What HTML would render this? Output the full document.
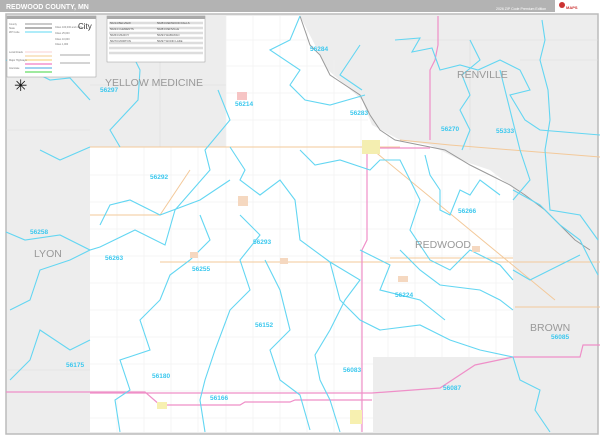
<!DOCTYPE html><html><head><style>
body{margin:0;width:600px;height:436px;overflow:hidden;background:#fff;font-family:"Liberation Sans",sans-serif}
</style></head><body>
<svg width="600" height="436" viewBox="0 0 600 436" xmlns="http://www.w3.org/2000/svg" font-family="Liberation Sans, sans-serif">
<rect width="600" height="436" fill="#fff"/>
<rect x="0" y="0" width="600" height="12" fill="#b3b3b3"/>
<text x="6" y="9" font-size="7" font-weight="bold" fill="#fff">REDWOOD COUNTY, MN</text>
<text x="496" y="10" font-size="3.5" fill="#fff">2026 ZIP Code Premium Edition</text>
<rect x="555" y="0" width="45" height="12" fill="#fff"/>
<circle cx="562" cy="5" r="3" fill="#c33"/><text x="566" y="9" font-size="4" fill="#c33" font-weight="bold">MAPS</text>
<rect x="6" y="14" width="592" height="420" fill="#ededed" stroke="#bbb" stroke-width="1.5"/>
<path d="M226,16 L300,16 L315,45 L328,70 L345,85 L362,100 L372,125 L400,140 L430,145 L460,160 L490,170 L513,188 L513,357 L373,357 L373,432 L90,432 L90,147 L226,147 Z" fill="#fff"/>
<g stroke="#eeeeee" stroke-width="0.6">
<path d="M90,175H513M90,202H513M90,229H513M90,256H513M90,283H513M90,310H513M90,337H513M90,364H373M90,391H373M90,418H373M226,40H310M226,66H325M226,93H350M226,120H368"/>
<path d="M117,147V432M144,147V432M171,147V432M198,147V432M226,16V432M253,16V432M280,16V432M307,30V432M334,60V432M361,90V432M388,130V357M415,140V357M442,150V357M469,162V357M496,175V357"/>
</g>
<g stroke="#ddd" stroke-width="0.6"><path d="M6,130H90M90,85H226M160,16V147M400,40H598M470,40V150M520,60H598M6,370H90"/></g>
<g stroke="#f3c99a" stroke-width="1" fill="none">
<path d="M90,147H400M190,170L160,215L90,215M160,262H330M330,262H600M390,258H513M373,150L555,300M515,307L600,307M400,140L450,145L600,157"/>
</g>
<path d="M300,16 L310,45 L320,55 L330,75 L345,85 L360,95 L370,115 L380,130 L395,140 L420,145 L445,150 L470,165 L490,175 L510,185 L525,195 L545,210 L560,225 L575,240 L590,250" stroke="#999" stroke-width="1" fill="none"/>
<g stroke="#ef8fc8" stroke-width="1.2" fill="none">
<path d="M438,16 V45 L435,60 L430,70 V140 M367,148 H430 M367,148 V240 L362,250 V432"/>
<path d="M6,392 H145 L160,405 H240 L245,402 H290 L295,400 H372 M90,393 H372"/>
<path d="M372,393 L440,388 L475,365 L513,357 L580,357 L583,345 H600"/>
</g>
<g stroke="#63d6f2" stroke-width="1.1" fill="none">
<path d="M140,16 L145,40 L130,50 L140,70 L138,100 L110,130 L120,147"/>
<path d="M218,90 L230,120 L205,150 L210,170 L175,210 L165,245 L135,230 L100,247 L90,250 L60,235 L25,240 L6,232"/>
<path d="M300,16 L290,40 L270,50 L300,70 L290,85 L305,100 L330,105 L365,95"/>
<path d="M360,45 L350,60 L340,75 L362,90"/>
<path d="M395,40 L420,38 L412,52 L432,48 L440,70 L460,65 L478,70 L500,60 L520,70 L530,90 L510,95 L525,120 L540,130 L600,135"/>
<path d="M470,40 L480,60 L462,75 L470,95 L460,110 L470,130 L462,150"/>
<path d="M542,20 L545,40 L540,60 L548,90 L550,120 L545,150 L550,210 L580,215 L598,240"/>
<path d="M500,70 L510,110 L520,150 L530,180 L513,200"/>
<path d="M425,155 L430,175 L440,190 L440,210 L450,215 L460,190 L470,195 L480,180 L500,195"/>
<path d="M300,150 L315,165 L340,160 L370,170 L380,160 L400,160 L410,180 L420,200 L410,230 L430,260 L450,270 L470,250 L500,265 L513,280"/>
<path d="M230,147 L245,170 L240,180 L260,195 L280,180 L295,200 L300,240 L330,262 L340,300 L360,320 L380,330 L420,325 L450,340 L480,350 L513,357"/>
<path d="M230,180 L200,200 L160,215 L130,200 L110,205 L100,225"/>
<path d="M200,215 L210,240 L190,260 L170,275 L160,300 L140,320 L150,350 L120,360 L130,390 L115,400 L120,432"/>
<path d="M240,215 L260,235 L240,260 L250,290 L230,310 L215,350 L205,380 L200,400 L205,432"/>
<path d="M265,260 L280,290 L290,330 L270,350 L280,380 L300,395 L310,430"/>
<path d="M330,262 L360,280 L345,300 L330,330 L315,355 L320,380 L330,400 L340,432"/>
<path d="M360,250 L390,265 L380,290 L420,300 L445,320"/>
<path d="M400,250 L420,270 L440,285 L480,290 L500,300 L513,310"/>
<path d="M513,190 L540,205 L560,225 L580,240 L590,260 L598,275"/>
<path d="M513,270 L530,280 L560,265 L580,255"/>
<path d="M513,357 L520,380 L540,390 L535,410 L550,432"/>
<path d="M90,340 L70,350 L40,330 L30,360 L10,380 M90,250 L70,260 L40,270 L30,300 L10,310"/>
<path d="M6,60 L30,70 L50,80 L70,78 L90,100 M40,150 L60,160 L90,147"/>
</g>
<g fill="#999" font-size="10.5">
<text x="105" y="86">YELLOW MEDICINE</text>
<text x="457" y="78">RENVILLE</text>
<text x="415" y="248">REDWOOD</text>
<text x="34" y="257">LYON</text>
<text x="530" y="331">BROWN</text>
</g>
<g fill="#3cc8ee" font-size="6.5" font-weight="bold">
<text x="100" y="92">56297</text><text x="310" y="51">56284</text><text x="235" y="106">56214</text>
<text x="350" y="115">56283</text><text x="441" y="131">56270</text><text x="496" y="133">55333</text>
<text x="150" y="179">56292</text><text x="458" y="213">56266</text><text x="253" y="244">56293</text>
<text x="30" y="234">56258</text><text x="105" y="260">56263</text><text x="192" y="271">56255</text>
<text x="395" y="297">56224</text><text x="551" y="339">56085</text><text x="255" y="327">56152</text>
<text x="66" y="367">56175</text><text x="152" y="378">56180</text><text x="343" y="372">56083</text>
<text x="443" y="390">56087</text><text x="210" y="400">56166</text>
</g>
<g fill="#f5d8c0"><rect x="237" y="92" width="10" height="8" fill="#f6c4c4"/><rect x="238" y="196" width="10" height="10"/><rect x="280" y="258" width="8" height="6"/><rect x="190" y="252" width="8" height="6"/><rect x="398" y="276" width="10" height="6"/><rect x="472" y="246" width="8" height="6"/><rect x="350" y="410" width="12" height="14" fill="#f7f0b0"/><rect x="157" y="402" width="10" height="7" fill="#f7f0b0"/><rect x="362" y="140" width="18" height="14" fill="#f4eeb0"/></g>
<rect x="7" y="16" width="89" height="61" fill="#fff" stroke="#999" stroke-width="0.5"/>
<rect x="7" y="16" width="89" height="3" fill="#aaa"/>
<g stroke-width="1.2">
<path d="M25,24H52" stroke="#aaa"/><path d="M25,28H52" stroke="#888"/><path d="M25,32H52" stroke="#7fe0f5"/>
<path d="M25,52H52" stroke="#fad9d9"/><path d="M25,56H52" stroke="#f5d7a8"/><path d="M25,60H52" stroke="#f6d78a"/><path d="M25,64H52" stroke="#f07cc4"/><path d="M25,68H52" stroke="#6bb7e8"/><path d="M25,72H52" stroke="#66dd66"/>
</g>
<g fill="#777" font-size="2.5"><text x="9" y="25">County</text><text x="9" y="29">State</text><text x="9" y="33">ZIP Code</text><text x="9" y="53">Local Roads</text><text x="9" y="61">Major Highways</text><text x="9" y="69">Interstate</text>
<text x="55" y="28">Cities 100,000 and more</text><text x="55" y="34">Cities 25,000</text><text x="55" y="40">Cities 10,000</text><text x="55" y="45">Cities 1,000</text></g>
<text x="78" y="29" font-size="8" fill="#333">City</text>
<path d="M60,55H90M60,63H90" stroke="#555" stroke-width="0.5"/>
<rect x="107" y="16" width="98" height="46" fill="#fff" stroke="#999" stroke-width="0.5"/>
<rect x="107" y="16" width="98" height="3" fill="#aaa"/>
<g stroke="#ddd" stroke-width="2.5"><path d="M109,23H203M109,28H203M109,33H203M109,38H203M109,43H203M109,48H203M109,53H203"/></g>
<g fill="#555" font-size="2.8"><text x="110" y="24">56214 BELVIEW</text><text x="110" y="30">56224 CLEMENTS</text><text x="110" y="36">56263 MILROY</text><text x="110" y="42">56270 MORTON</text><text x="157" y="24">56283 REDWOOD FALLS</text><text x="157" y="30">56284 RENVILLE</text><text x="157" y="36">56293 WABASSO</text><text x="157" y="42">56297 WOOD LAKE</text></g>
<text x="14" y="91" font-size="16" fill="#111">✳</text>
</svg>
</body></html>
